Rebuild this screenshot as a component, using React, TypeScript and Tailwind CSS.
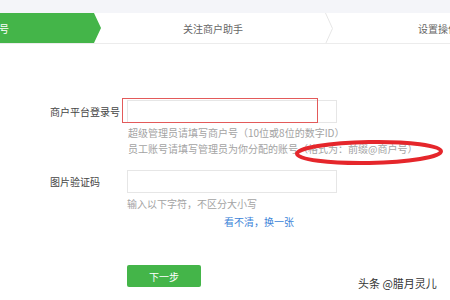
import React from 'react';

const font = { fontFamily: '"Noto Sans CJK SC", "Noto Sans", sans-serif' };

const Chevron: React.FC = () => (
  <svg width="8" height="31" viewBox="0 0 8 31" className="shrink-0">
    <polyline points="0.5,0 7.5,15.5 0.5,31" fill="none" stroke="#e6e6e6" strokeWidth="1" />
  </svg>
);

const StepBar: React.FC = () => (
  <div className="bg-[#f4f5f9] pt-[13px]">
    <div className="flex h-[31px] bg-white border-b border-[#ececec] overflow-hidden">
      <div className="w-[101px] shrink-0 bg-[#44b549] [clip-path:polygon(0_0,94px_0,101px_50%,94px_100%,0_100%)] flex items-center">
        <span className="text-white text-[10px] ml-[-1px]">号</span>
      </div>
      <div className="w-[224px] shrink-0 flex items-center justify-center text-[10px] text-[#666]">
        关注商户助手
      </div>
      <Chevron />
      <div className="flex-1 min-w-0 flex items-center pl-[85px] text-[10px] text-[#666] whitespace-nowrap overflow-hidden">
        设置操作员
      </div>
    </div>
  </div>
);

export default function App() {
  return (
    <div className="relative w-[450px] h-[300px] overflow-hidden bg-white" style={font}>
      <StepBar />

      <div className="pl-[50px]">
        <div className="flex items-center mt-[56px]">
          <div className="w-[77px] text-[10px] text-[#444]">商户平台登录号</div>
          <div className="w-[210px] h-[23px] border border-[#e6e6e6] bg-white" />
        </div>
        <div className="ml-[78px] mt-[2px] text-[10px] leading-[16px] text-[#a3a3a3] whitespace-nowrap">
          <div>超级管理员请填写商户号（10位或8位的数字ID）</div>
          <div>员工账号请填写管理员为你分配的账号（格式为：前缀@商户号）</div>
        </div>

        <div className="flex items-center mt-[13px]">
          <div className="w-[77px] text-[10px] text-[#444]">图片验证码</div>
          <div className="w-[210px] h-[23px] border border-[#e6e6e6] bg-white" />
        </div>
        <div className="ml-[77px] mt-[3px] text-[10px] leading-[16px] text-[#a3a3a3]">
          输入以下字符，不区分大小写
        </div>
        <div className="ml-[174px] mt-[2px] text-[10px] leading-[16px] text-[#3b82d8]">
          看不清，换一张
        </div>

        <button className="ml-[77px] mt-[35px] w-[74px] h-[22px] rounded-[2px] bg-[#44b549] text-white text-[10px] flex items-center justify-center">
          下一步
        </button>
      </div>

      {/* annotations drawn over the form */}
      <div className="absolute left-[122px] top-[98px] w-[196px] h-[25px] border border-[#e35a5a]" />
      <svg className="absolute left-[292px] top-[139px]" width="154" height="28" viewBox="0 0 154 28">
        <ellipse cx="77" cy="13.5" rx="72" ry="10.5" fill="none" stroke="#e5262b" strokeWidth="4" transform="rotate(-1 77 13.5)" />
      </svg>

      <div className="absolute left-[358px] top-[275px] text-[11px] text-[#333] whitespace-nowrap [text-shadow:0_0_2px_#fff]">
        头条 @腊月灵儿
      </div>
    </div>
  );
}
